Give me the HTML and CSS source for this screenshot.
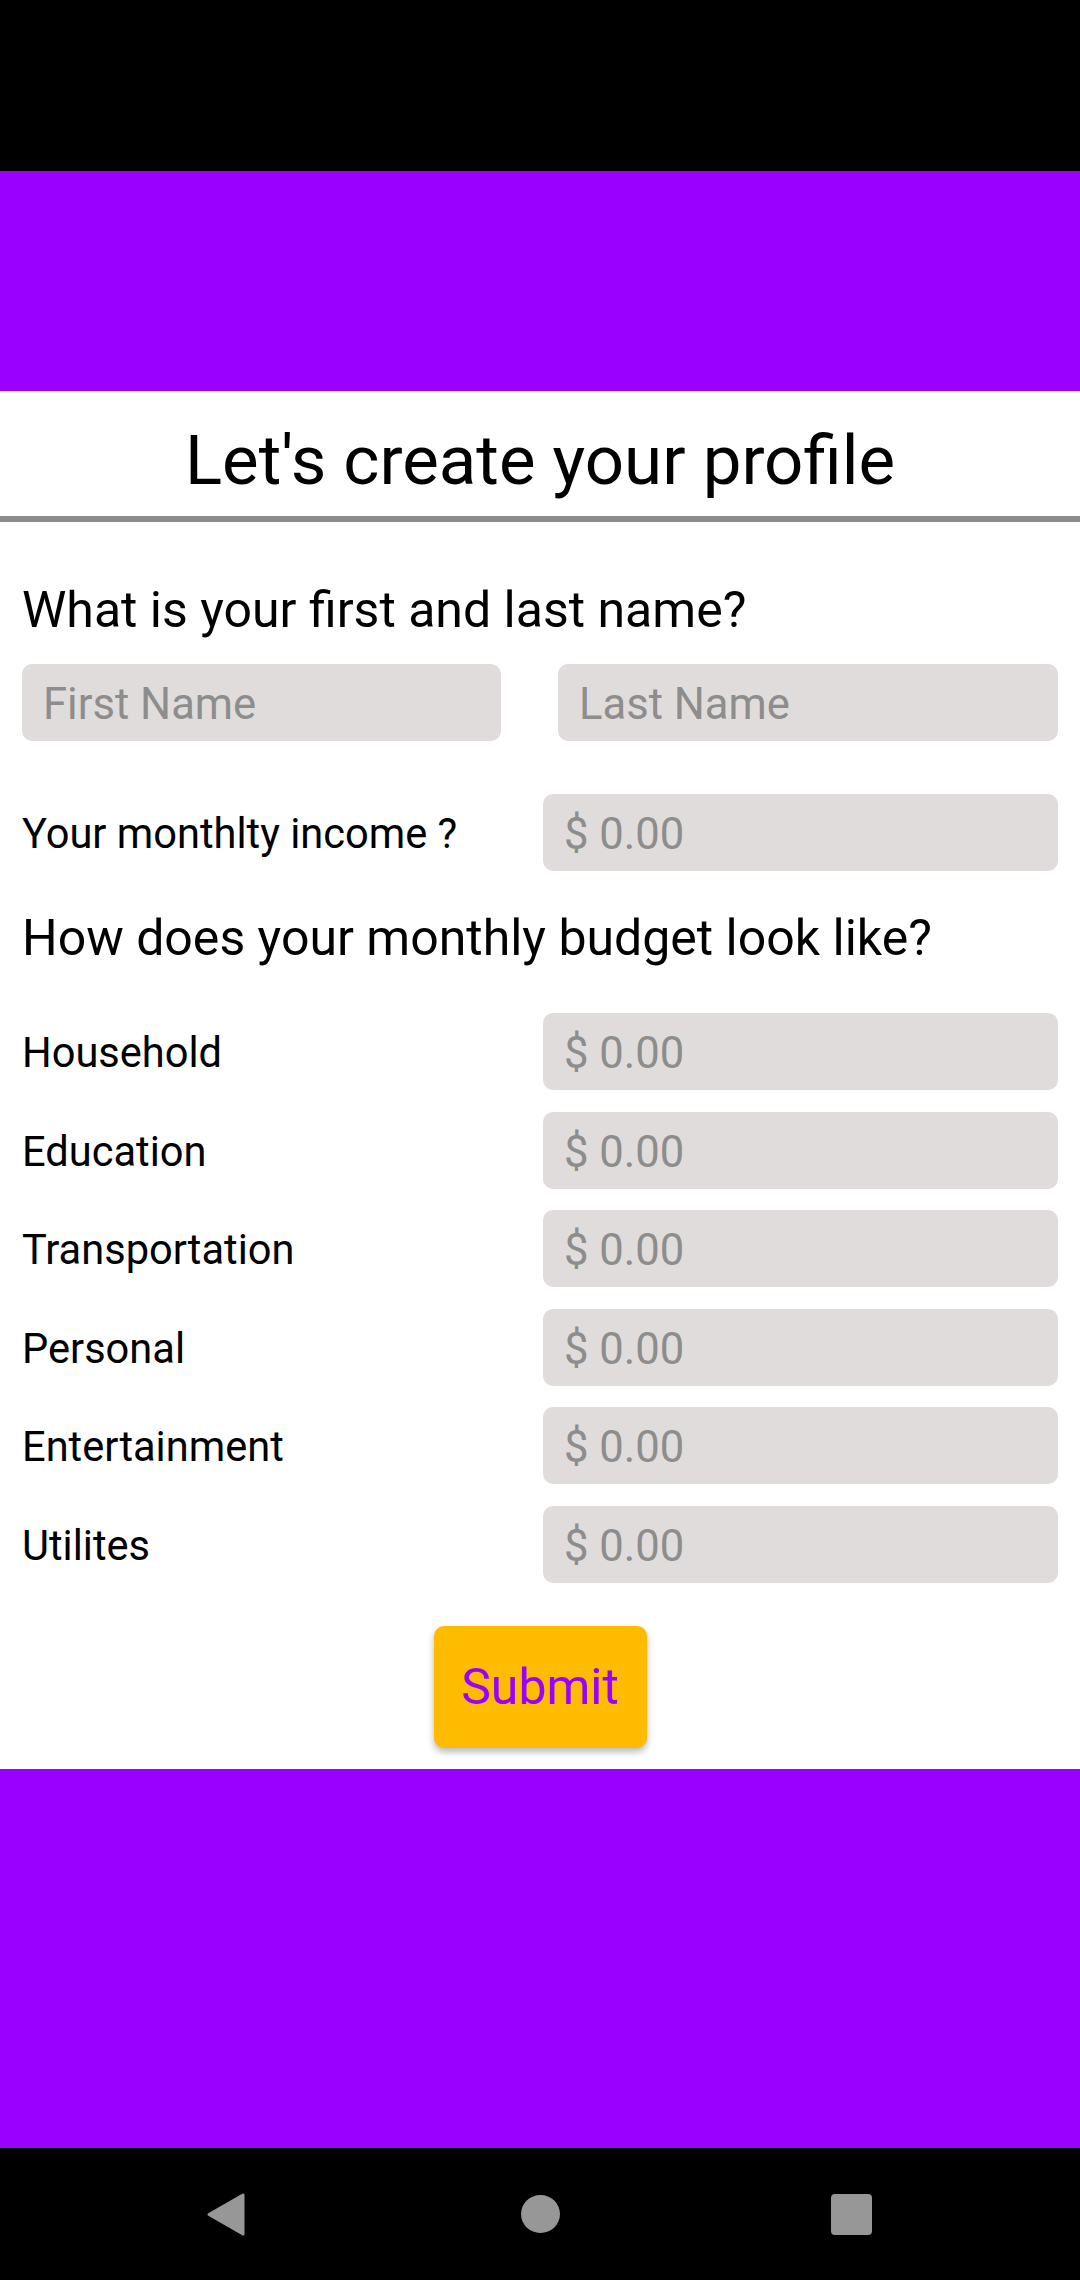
FILE: index.html
```html
<!DOCTYPE html>
<html lang="en">
<head>
<meta charset="utf-8">
<title>Let's create your profile</title>
<link rel="stylesheet" href="styles.css">
</head>
<body>
<div class="screen">
  <div class="status-bar"></div>
  <header class="app-header"></header>
  <div class="title-bar">
    <h1 class="title">Let's create your profile</h1>
  </div>
  <main class="form">
    <h2 class="question q-name">What is your first and last name?</h2>
    <div class="name-row">
      <input class="field field-first" type="text" placeholder="First Name">
      <input class="field field-last" type="text" placeholder="Last Name">
    </div>
    <div class="row row-income">
      <label class="row-label">Your monthlty income ?</label>
      <input class="field" type="text" placeholder="$ 0.00">
    </div>
    <h2 class="question q-budget">How does your monthly budget look like?</h2>
    <div class="budget">
      <div class="row"><label class="row-label">Household</label><input class="field" type="text" placeholder="$ 0.00"></div>
      <div class="row"><label class="row-label">Education</label><input class="field" type="text" placeholder="$ 0.00"></div>
      <div class="row"><label class="row-label">Transportation</label><input class="field" type="text" placeholder="$ 0.00"></div>
      <div class="row"><label class="row-label">Personal</label><input class="field" type="text" placeholder="$ 0.00"></div>
      <div class="row"><label class="row-label">Entertainment</label><input class="field" type="text" placeholder="$ 0.00"></div>
      <div class="row"><label class="row-label">Utilites</label><input class="field" type="text" placeholder="$ 0.00"></div>
    </div>
    <div class="actions">
      <button class="submit" type="button">Submit</button>
    </div>
  </main>
  <footer class="app-footer"></footer>
  <nav class="nav-bar">
    <div class="nav-cell">
      <svg class="nav-back" width="40" height="45" viewBox="0 0 40 45"><path d="M37 3 L37 42 L3 22.5 Z" fill="#979797" stroke="#979797" stroke-width="3" stroke-linejoin="round"/></svg>
    </div>
    <div class="nav-cell"><span class="nav-home"></span></div>
    <div class="nav-cell"><span class="nav-recent"></span></div>
  </nav>
</div>
</body>
</html>
```
FILE: styles.css
```css
* { box-sizing: border-box; }
html, body { margin: 0; padding: 0; background: #ffffff; }
body { font-family: Roboto, "Noto Sans", sans-serif; color: #000; }
.screen { width: 1080px; height: 2280px; display: flex; flex-direction: column; overflow: hidden; }
.status-bar { height: 171px; background: #000; flex: none; }
.app-header { height: 220px; background: #9900ff; flex: none; }
.title-bar { border-bottom: 6px solid #8c8c8c; height: 131px; padding-top: 29px; flex: none; }
.title { margin: 0; font-size: 69px; line-height: 82px; font-weight: 400; text-align: center; }
.form { flex: none; height: 1247px; padding: 59px 22px 0 22px; display: flex; flex-direction: column; }
.question { margin: 0; font-size: 50px; line-height: 58px; font-weight: 400; }
.name-row { display: flex; justify-content: space-between; margin-top: 25px; }
.field { height: 77px; border: none; border-radius: 10px; background: #e0dcdb; font-family: Roboto, "Noto Sans", sans-serif; font-size: 43.6px; color: #333; padding: 4px 21px 0 21px; outline: none; margin: 0; }
.field::placeholder { color: #8d8d8d; opacity: 1; }
.field-first { width: 479px; }
.field-last { width: 500px; }
.row { display: grid; grid-template-columns: 1fr 515px; align-items: center; height: 77px; }
.row .field { width: 515px; }
.row-income { margin-top: 53px; }
.q-budget { margin-top: 38px; }
.row-label { font-size: 41.6px; line-height: 48px; padding-top: 3px; }
.budget { margin-top: 46px; display: flex; flex-direction: column; gap: 21.6px; }
.actions { display: flex; justify-content: center; margin-top: 43px; }
.submit { width: 213px; height: 122px; border: none; border-radius: 10px; background: #ffbb00; color: #9900ff; font-family: Roboto, "Noto Sans", sans-serif; font-size: 50px; padding: 0; box-shadow: 0 4px 7px rgba(0,0,0,0.28); }
.app-footer { flex: none; height: 379px; background: #9900ff; }
.nav-bar { flex: none; height: 132px; background: #000; display: flex; justify-content: center; align-items: center; }
.nav-cell { width: 314px; display: flex; justify-content: center; align-items: center; }
.nav-home { width: 39px; height: 38px; border-radius: 50%; background: #979797; display: block; }
.nav-recent { width: 41px; height: 41px; border-radius: 4px; background: #979797; display: block; margin-right: 6px; }
.nav-back { display: block; }
```
